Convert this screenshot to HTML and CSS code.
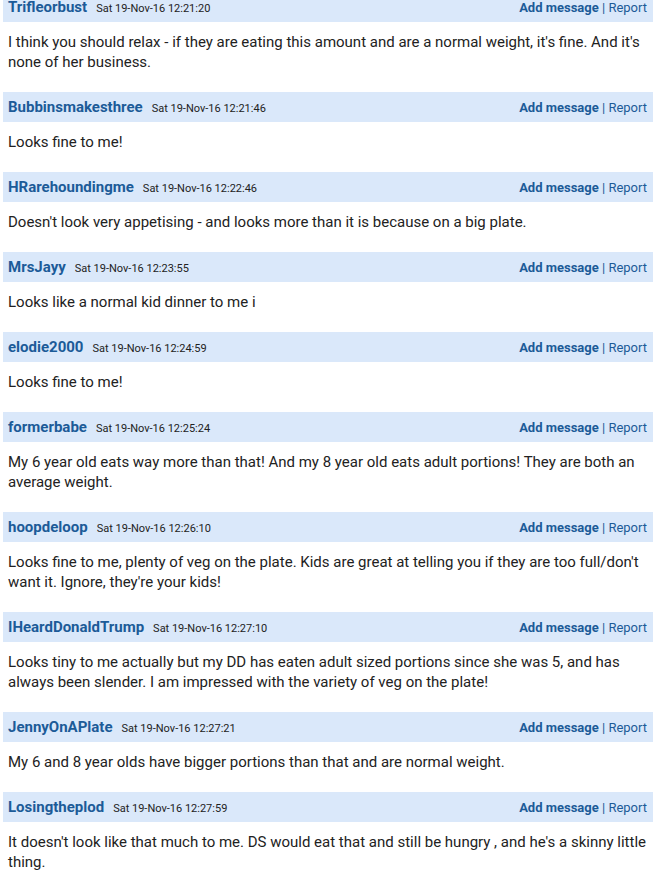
FILE: index.html
```html
<!DOCTYPE html>
<html lang="en">
<head>
  <meta charset="UTF-8">
  <title>Thread</title>
  <link rel="stylesheet" href="styles.css">
</head>
<body>
  <div class="thread">

    <div class="post">
      <div class="post-head">
        <div class="who"><span class="name">Trifleorbust</span><span class="date">Sat 19-Nov-16 12:21:20</span></div>
        <div class="actions"><a class="add">Add message</a> | <a class="report">Report</a></div>
      </div>
      <p class="post-body">I think you should relax - if they are eating this amount and are a normal weight, it's fine. And it's none of her business.</p>
    </div>

    <div class="post">
      <div class="post-head">
        <div class="who"><span class="name">Bubbinsmakesthree</span><span class="date">Sat 19-Nov-16 12:21:46</span></div>
        <div class="actions"><a class="add">Add message</a> | <a class="report">Report</a></div>
      </div>
      <p class="post-body">Looks fine to me!</p>
    </div>

    <div class="post">
      <div class="post-head">
        <div class="who"><span class="name">HRarehoundingme</span><span class="date">Sat 19-Nov-16 12:22:46</span></div>
        <div class="actions"><a class="add">Add message</a> | <a class="report">Report</a></div>
      </div>
      <p class="post-body">Doesn't look very appetising - and looks more than it is because on a big plate.</p>
    </div>

    <div class="post">
      <div class="post-head">
        <div class="who"><span class="name">MrsJayy</span><span class="date">Sat 19-Nov-16 12:23:55</span></div>
        <div class="actions"><a class="add">Add message</a> | <a class="report">Report</a></div>
      </div>
      <p class="post-body">Looks like a normal kid dinner to me i</p>
    </div>

    <div class="post">
      <div class="post-head">
        <div class="who"><span class="name">elodie2000</span><span class="date">Sat 19-Nov-16 12:24:59</span></div>
        <div class="actions"><a class="add">Add message</a> | <a class="report">Report</a></div>
      </div>
      <p class="post-body">Looks fine to me!</p>
    </div>

    <div class="post">
      <div class="post-head">
        <div class="who"><span class="name">formerbabe</span><span class="date">Sat 19-Nov-16 12:25:24</span></div>
        <div class="actions"><a class="add">Add message</a> | <a class="report">Report</a></div>
      </div>
      <p class="post-body">My 6 year old eats way more than that! And my 8 year old eats adult portions! They are both an average weight.</p>
    </div>

    <div class="post">
      <div class="post-head">
        <div class="who"><span class="name">hoopdeloop</span><span class="date">Sat 19-Nov-16 12:26:10</span></div>
        <div class="actions"><a class="add">Add message</a> | <a class="report">Report</a></div>
      </div>
      <p class="post-body">Looks fine to me, plenty of veg on the plate. Kids are great at telling you if they are too full/don't want it. Ignore, they're your kids!</p>
    </div>

    <div class="post">
      <div class="post-head">
        <div class="who"><span class="name">IHeardDonaldTrump</span><span class="date">Sat 19-Nov-16 12:27:10</span></div>
        <div class="actions"><a class="add">Add message</a> | <a class="report">Report</a></div>
      </div>
      <p class="post-body">Looks tiny to me actually but my DD has eaten adult sized portions since she was 5, and has always been slender. I am impressed with the variety of veg on the plate!</p>
    </div>

    <div class="post">
      <div class="post-head">
        <div class="who"><span class="name">JennyOnAPlate</span><span class="date">Sat 19-Nov-16 12:27:21</span></div>
        <div class="actions"><a class="add">Add message</a> | <a class="report">Report</a></div>
      </div>
      <p class="post-body">My 6 and 8 year olds have bigger portions than that and are normal weight.</p>
    </div>

    <div class="post">
      <div class="post-head">
        <div class="who"><span class="name">Losingtheplod</span><span class="date">Sat 19-Nov-16 12:27:59</span></div>
        <div class="actions"><a class="add">Add message</a> | <a class="report">Report</a></div>
      </div>
      <p class="post-body">It doesn't look like that much to me. DS would eat that and still be hungry , and he's a skinny little thing.</p>
    </div>

  </div>
</body>
</html>
```

FILE: styles.css
```css
* {
  margin: 0;
  padding: 0;
  box-sizing: border-box;
}

body {
  background: #fff;
  font-family: Roboto, "Liberation Sans", sans-serif;
  color: #222;
  overflow: hidden;
}

/* Thread list */
.thread {
  width: 650px;
  margin: -8px 0 0 3px;
}

.post-head {
  height: 30px;
  background: #dae8fa;
  display: flex;
  justify-content: space-between;
  align-items: baseline;
  padding: 6px 6px 0 5px;
}

.who {
  display: flex;
  align-items: baseline;
  gap: 9px;
}

.name {
  font-size: 15px;
  font-weight: bold;
  color: #1c5b98;
}

.date {
  font-size: 11px;
  color: #222;
}

.actions {
  font-size: 13px;
  color: #1c5b98;
}

.actions .add {
  font-weight: bold;
}

.post-body {
  font-size: 15px;
  line-height: 20px;
  padding: 10px 5px 20px 5px;
}
```
